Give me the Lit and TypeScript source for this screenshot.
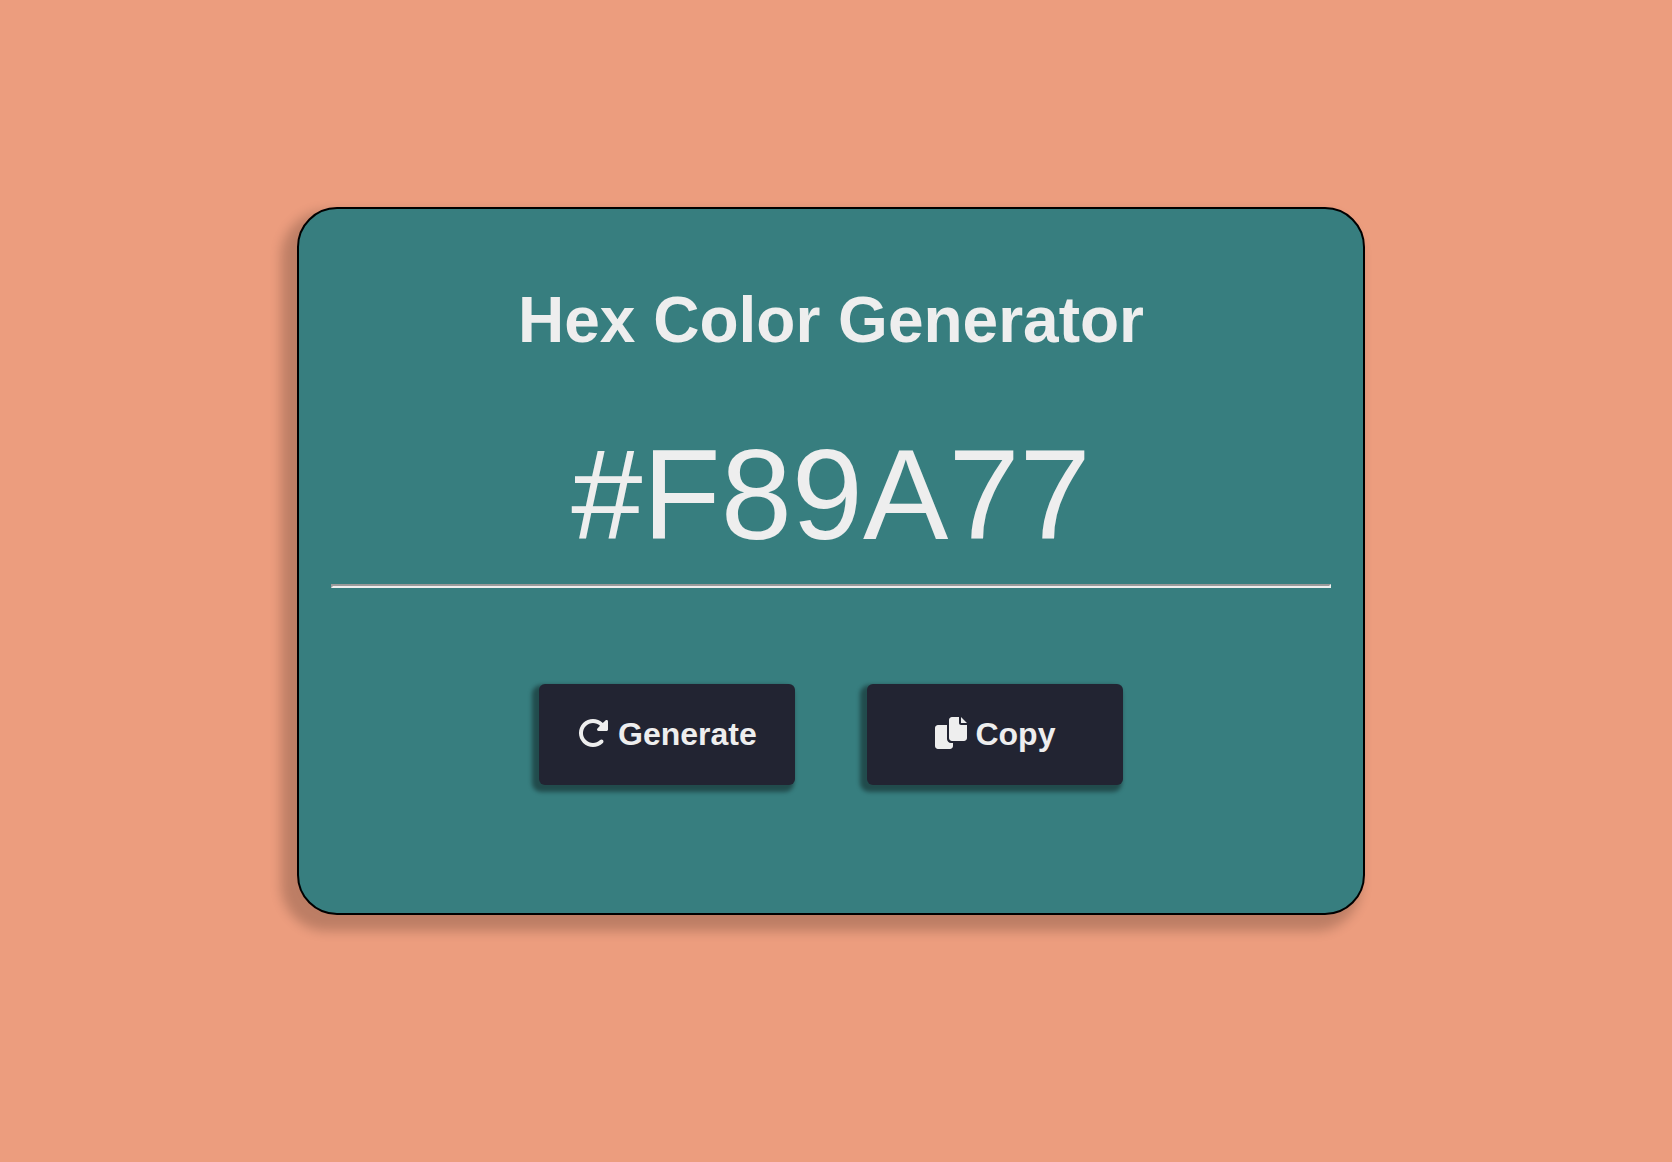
import { LitElement, html, svg, css } from "lit";
import { customElement, state } from "lit/decorators.js";

const rotateIcon = svg`<path d="M463.5 224H472c13.3 0 24-10.7 24-24V72c0-9.7-5.8-18.5-14.8-22.2s-19.3-1.7-26.2 5.2L413.4 96.6c-87.6-86.5-228.7-86.2-315.8 1c-87.5 87.5-87.5 229.3 0 316.8s229.3 87.5 316.8 0c12.5-12.5 12.5-32.8 0-45.3s-32.8-12.5-45.3 0c-62.5 62.5-163.8 62.5-226.3 0s-62.5-163.8 0-226.3c62.2-62.2 162.7-62.5 225.3-1L327 183c-6.9 6.9-8.9 17.2-5.2 26.2s12.5 14.8 22.2 14.8H463.5z"/>`;

const copyIcon = svg`<path d="M384 96L384 0h-112c-26.51 0-48 21.49-48 48v288c0 26.51 21.49 48 48 48H464c26.51 0 48-21.49 48-48V128h-95.1C398.4 128 384 113.6 384 96zM416 0v96h96L416 0zM192 352V128h-144c-26.51 0-48 21.49-48 48v288c0 26.51 21.49 48 48 48h192c26.51 0 48-21.49 48-48L288 416h-32C220.7 416 192 387.3 192 352z"/>`;

@customElement("app-root")
export class AppRoot extends LitElement {
  static styles = css`
    :host {
      display: flex;
      align-items: center;
      justify-content: center;
      box-sizing: border-box;
      min-height: 100vh;
      padding: 0 10px 40px 0;
      background: #ec9d7e;
      color: #eee;
      font-family: "Liberation Sans", Arial, Helvetica, sans-serif;
    }

    .card {
      display: flex;
      flex-direction: column;
      box-sizing: border-box;
      width: 100%;
      max-width: 1068px;
      padding: 75px 32px 128px;
      border: 2px solid #000;
      border-radius: 40px;
      background: #377e7f;
      box-shadow: -10px 10px 12px 6px rgba(0, 0, 0, 0.2);
      text-align: center;
    }

    .title {
      margin: 0 0 67px;
      font-size: 64px;
      line-height: 72px;
      font-weight: 700;
    }

    .hex {
      font-size: 128px;
      line-height: 144px;
    }

    .rule {
      width: 100%;
      box-sizing: border-box;
      margin: 17px 0 96px;
      border: 2px inset #eee;
    }

    .actions {
      display: flex;
      flex-wrap: wrap;
      justify-content: center;
      gap: 72px;
    }

    .action {
      width: 256px;
      padding: 32px 0;
      border: 0;
      border-radius: 6px;
      background: #222432;
      color: inherit;
      box-shadow: -4px 4px 4px 3px rgba(0, 0, 0, 0.4);
      font: 700 32px/37px "Liberation Sans", Arial, sans-serif;
      cursor: pointer;
    }

    .icon {
      width: 32px;
      height: 32px;
      vertical-align: -4px;
      fill: currentColor;
    }
  `;

  @state() private hex = "#F89A77";

  private generate() {
    const value = Math.floor(Math.random() * 0x1000000);
    this.hex = "#" + value.toString(16).padStart(6, "0").toUpperCase();
    this.style.background = this.hex;
  }

  private copy() {
    navigator.clipboard?.writeText(this.hex);
  }

  render() {
    return html`
      <main class="card">
        <h1 class="title">Hex Color Generator</h1>
        <output class="hex">${this.hex}</output>
        <hr class="rule" />
        <div class="actions">
          <button class="action" type="button" @click=${this.generate}>
            <svg class="icon" viewBox="0 0 512 512" aria-hidden="true">${rotateIcon}</svg>
            Generate
          </button>
          <button class="action" type="button" @click=${this.copy}>
            <svg class="icon" viewBox="0 0 512 512" aria-hidden="true">${copyIcon}</svg>
            Copy
          </button>
        </div>
      </main>
    `;
  }
}
